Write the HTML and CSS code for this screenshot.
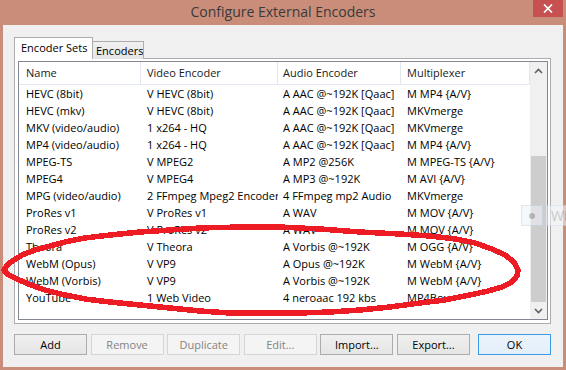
FILE: index.html
```html
<!DOCTYPE html>
<html lang="en">
<head>
<meta charset="utf-8">
<title>Configure External Encoders</title>
<link rel="stylesheet" href="styles.css">
</head>
<body>
<div class="window">
  <div class="titlebar">
    <span class="title">Configure External Encoders</span>
    <div class="close">
      <svg width="10" height="9" viewBox="0 0 10 9"><path d="M1 0.5 L9 8.5 M9 0.5 L1 8.5" stroke="#fff" stroke-width="1.7" fill="none"/></svg>
    </div>
  </div>
  <div class="client">
    <div class="tabs">
      <div class="tab active">Encoder Sets</div>
      <div class="tab">Encoders</div>
    </div>
    <div class="panel">
      <div class="listview">
        <div class="list-main">
          <div class="row header">
            <div class="cell">Name</div><div class="cell">Video Encoder</div><div class="cell">Audio Encoder</div><div class="cell">Multiplexer</div>
          </div>
          <div class="row"><div class="cell">HEVC (8bit)</div><div class="cell">V HEVC (8bit)</div><div class="cell">A AAC @~192K [Qaac]</div><div class="cell">M MP4 {A/V}</div></div>
          <div class="row"><div class="cell">HEVC (mkv)</div><div class="cell">V HEVC (8bit)</div><div class="cell">A AAC @~192K [Qaac]</div><div class="cell">MKVmerge</div></div>
          <div class="row"><div class="cell">MKV (video/audio)</div><div class="cell">1 x264 - HQ</div><div class="cell">A AAC @~192K [Qaac]</div><div class="cell">MKVmerge</div></div>
          <div class="row"><div class="cell">MP4 (video/audio)</div><div class="cell">1 x264 - HQ</div><div class="cell">A AAC @~192K [Qaac]</div><div class="cell">M MP4 {A/V}</div></div>
          <div class="row"><div class="cell">MPEG-TS</div><div class="cell">V MPEG2</div><div class="cell">A MP2 @256K</div><div class="cell">M MPEG-TS {A/V}</div></div>
          <div class="row"><div class="cell">MPEG4</div><div class="cell">V MPEG4</div><div class="cell">A MP3 @~192K</div><div class="cell">M AVI {A/V}</div></div>
          <div class="row"><div class="cell">MPG (video/audio)</div><div class="cell">2 FFmpeg Mpeg2 Encoder</div><div class="cell">4 FFmpeg mp2 Audio</div><div class="cell">MKVmerge</div></div>
          <div class="row"><div class="cell">ProRes v1</div><div class="cell">V ProRes v1</div><div class="cell">A WAV</div><div class="cell">M MOV {A/V}</div></div>
          <div class="row"><div class="cell">ProRes v2</div><div class="cell">V ProRes v2</div><div class="cell">A WAV</div><div class="cell">M MOV {A/V}</div></div>
          <div class="row"><div class="cell">Theora</div><div class="cell">V Theora</div><div class="cell">A Vorbis @~192K</div><div class="cell">M OGG {A/V}</div></div>
          <div class="row"><div class="cell">WebM (Opus)</div><div class="cell">V VP9</div><div class="cell">A Opus @~192K</div><div class="cell">M WebM {A/V}</div></div>
          <div class="row"><div class="cell">WebM (Vorbis)</div><div class="cell">V VP9</div><div class="cell">A Vorbis @~192K</div><div class="cell">M WebM {A/V}</div></div>
          <div class="row"><div class="cell">YouTube</div><div class="cell">1 Web Video</div><div class="cell">4 neroaac 192 kbs</div><div class="cell">MP4Box</div></div>
        </div>
        <div class="scrollbar">
          <div class="sb-btn">
            <svg width="9" height="6" viewBox="0 0 9 6"><path d="M1 5 L4.5 1.5 L8 5" stroke="#606060" stroke-width="1.6" fill="none"/></svg>
          </div>
          <div class="sb-track"><div class="sb-thumb"></div></div>
          <div class="sb-btn">
            <svg width="9" height="6" viewBox="0 0 9 6"><path d="M1 1 L4.5 4.5 L8 1" stroke="#606060" stroke-width="1.6" fill="none"/></svg>
          </div>
        </div>
      </div>
    </div>
    <div class="buttons">
      <div class="btn">Add</div>
      <div class="btn disabled">Remove</div>
      <div class="btn disabled">Duplicate</div>
      <div class="btn disabled">Edit...</div>
      <div class="btn">Import...</div>
      <div class="btn">Export...</div>
      <div class="btn default">OK</div>
    </div>
  </div>
  <div class="ghost">
    <div class="ghost-box"><span class="ghost-dot"></span></div>
    <div class="ghost-label">Wi</div>
  </div>
  <svg class="annotation" width="566" height="370" viewBox="0 0 566 370">
    <polyline shape-rendering="crispEdges" fill="none" stroke="#ed1c24" stroke-width="5.5" stroke-linejoin="round" stroke-linecap="round"
      points="4,270 8,264 14,260 22,255 35,250 50,246 65,242 85,238 110,235 140,232 170,230 200,228 240,227 280,227 320,229 360,232 400,234 430,236 455,239 475,243 492,249 505,255 514,262 518,270 517,276 512,282 502,287 488,291 470,295 445,300 420,303 390,307 360,310 330,312 300,313 260,313 230,313 200,311 170,308 140,305 110,302 85,299 65,295 45,290 28,284 15,278 7,274 4,270"/>
  </svg>
</div>
</body>
</html>
```

FILE: styles.css
```css
* { box-sizing: border-box; }
html, body { margin: 0; padding: 0; }
body {
  width: 566px;
  height: 370px;
  overflow: hidden;
  background: #c98d79;
  font-family: "Open Sans", "Noto Sans", sans-serif;
  font-size: 11px;
  color: #000;
}
.window {
  position: relative;
  width: 566px;
  height: 370px;
  display: flex;
  flex-direction: column;
  background: #c98d79;
}
.titlebar {
  height: 25px;
  display: grid;
  grid-template-columns: 1fr auto 1fr;
  align-items: start;
}
.title {
  grid-column: 2;
  font-size: 14px;
  line-height: 24px;
  color: #3a3a3a;
}
.close {
  grid-column: 3;
  justify-self: end;
  margin-right: 3px;
  width: 30px;
  height: 17px;
  background: #c75050;
  display: flex;
  align-items: center;
  justify-content: center;
  padding-bottom: 1px;
}
.close svg { display: block; }
.client {
  flex: 1;
  margin: 0 3px 3px 3px;
  background: #f0f0f0;
  padding: 12px 0 0 11px;
  display: flex;
  flex-direction: column;
}
.tabs {
  display: flex;
  align-items: flex-end;
  height: 22px;
  margin-bottom: -1px;
  position: relative;
  z-index: 1;
}
.tab {
  height: 18px;
  border: 1px solid #acacac;
  border-bottom: none;
  background: linear-gradient(#f0f0f0, #e5e5e5);
  padding: 0 0 0 3px;
  width: 51px;
  line-height: 17px;
  white-space: nowrap;
  overflow: hidden;
}
.tab.active {
  height: 22px;
  width: 79px;
  background: #fff;
  padding-left: 6px;
  line-height: 19px;
  margin-right: 0;
}
.tab + .tab { border-left: none; }
.panel {
  width: 537px;
  height: 266px;
  border: 1px solid #acacac;
  background: #fff;
  padding: 2px 2px 3px 3px;
}
.listview {
  height: 100%;
  border: 1px solid #828790;
  display: flex;
  background: #fff;
}
.list-main {
  width: 511px;
  overflow: hidden;
}
.row {
  display: grid;
  grid-template-columns: 122px 137px 123px 129px;
  height: 17px;
  line-height: 17px;
}
.row.header {
  height: 23px;
  line-height: 21px;
  border-bottom: 1px solid #e3e8f0;
  color: #1a1a1a;
}
.cell {
  white-space: nowrap;
  overflow: hidden;
  padding-left: 6px;
}
.cell:nth-child(1) { padding-left: 7px; }
.cell:nth-child(3) { padding-left: 5px; }
.header .cell { border-right: 1px solid #e3e8f0; }
.scrollbar {
  width: 17px;
  display: flex;
  flex-direction: column;
  background: #f0f0f0;
}
.sb-btn {
  height: 17px;
  display: flex;
  align-items: center;
  justify-content: center;
}
.sb-btn svg { display: block; }
.sb-track {
  flex: 1;
  padding: 77px 1px 0 1px;
}
.sb-thumb {
  height: 146px;
  background: #cdcdcd;
}
.buttons {
  display: flex;
  gap: 3.6px;
  margin-top: 10px;
  width: 537px;
}
.btn {
  width: 73px;
  height: 21px;
  border: 1px solid #acacac;
  background: linear-gradient(#f0f0f0, #e5e5e5);
  text-align: center;
  line-height: 19px;
  color: #000;
}
.btn.disabled {
  border-color: #d5d5d5;
  background: #f4f4f4;
  color: #838383;
}
.btn.default {
  margin-left: auto;
  border-color: #3c9be8;
  background: linear-gradient(#ecf4fc, #e3eefa);
}
.ghost {
  position: absolute;
  left: 521px;
  top: 205px;
  display: flex;
  gap: 3px;
  height: 21px;
  opacity: 0.55;
}
.ghost-box {
  width: 22px;
  height: 21px;
  border: 1px solid #c5d5e6;
  background: #eef3f9;
  display: flex;
  align-items: center;
  justify-content: center;
}
.ghost-dot {
  width: 6px;
  height: 6px;
  border-radius: 50%;
  background: #9a9a9a;
}
.ghost-label {
  width: 25px;
  height: 21px;
  border: 1px solid #d6e0ea;
  border-right: none;
  background: #f3f6fa;
  color: #aaa;
  font-size: 14px;
  line-height: 19px;
  padding-left: 4px;
}
.annotation {
  position: absolute;
  left: 0;
  top: 0;
  pointer-events: none;
}
```
